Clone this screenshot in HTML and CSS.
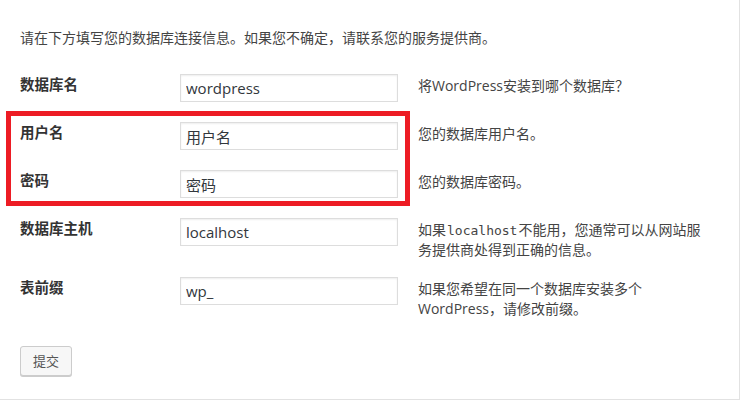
FILE: index.html
```html
<!DOCTYPE html>
<html lang="zh-CN">
<head>
<meta charset="utf-8">
<title>WordPress › 安装配置文件</title>
<link rel="stylesheet" href="styles.css">
</head>
<body>
<div class="page">
  <form class="setup">
    <p class="intro">请在下方填写您的数据库连接信息。如果您不确定，请联系您的服务提供商。</p>
    <div class="row">
      <label class="label">数据库名</label>
      <input class="field" type="text" value="wordpress">
      <div class="desc">将<span class="latin">WordPress</span>安装到哪个数据库？</div>
    </div>
    <div class="row">
      <label class="label">用户名</label>
      <input class="field" type="text" value="用户名">
      <div class="desc">您的数据库用户名。</div>
    </div>
    <div class="row">
      <label class="label">密码</label>
      <input class="field" type="text" value="密码">
      <div class="desc">您的数据库密码。</div>
    </div>
    <div class="row">
      <label class="label">数据库主机</label>
      <input class="field" type="text" value="localhost">
      <div class="desc">如果<code>localhost</code>不能用，您通常可以从网站服<br>务提供商处得到正确的信息。</div>
    </div>
    <div class="row">
      <label class="label">表前缀</label>
      <input class="field" type="text" value="wp_">
      <div class="desc">如果您希望在同一个数据库安装多个<br><span class="latin">WordPress</span>，请修改前缀。</div>
    </div>
    <div class="actions">
      <button class="button" type="button">提交</button>
    </div>
    <div class="highlight"></div>
  </form>
</div>
</body>
</html>
```
FILE: styles.css
```css
html, body {
  margin: 0;
  padding: 0;
  background: #fff;
}
body {
  font-family: "Open Sans", "Noto Sans CJK SC", sans-serif;
  font-size: 14px;
  color: #444;
}
.page {
  width: 740px;
  height: 400px;
  border-right: 1px solid #e2e2e2;
  border-bottom: 1px solid #e2e2e2;
  box-sizing: border-box;
  overflow: hidden;
}
.setup {
  position: relative;
  padding: 27px 20px 0 20px;
}
.intro {
  margin: 0 0 17px 0;
  line-height: 20px;
  font-family: "Noto Sans CJK SC", sans-serif;
  font-size: 14px;
}
.row {
  display: flex;
  align-items: flex-start;
  padding: 10px 0 8px 0;
}
.label {
  flex: none;
  width: 160px;
  font-family: "Noto Sans CJK SC", sans-serif;
  font-weight: bold;
  font-size: 14.5px;
  line-height: 20px;
  color: #333;
}
.field {
  flex: none;
  width: 218px;
  height: 28px;
  box-sizing: border-box;
  margin: 0 20px 2px 0;
  padding: 3px 5px;
  border: 1px solid #ddd;
  box-shadow: inset 0 1px 2px rgba(0, 0, 0, 0.07);
  font-family: "Open Sans", "Noto Sans CJK SC", sans-serif;
  font-size: 15px;
  line-height: 20px;
  color: #32373c;
  background: #fff;
  outline: none;
}
.desc {
  flex: none;
  width: 295px;
  margin-top: 1px;
  font-family: "Noto Sans CJK SC", sans-serif;
  font-size: 14px;
  line-height: 20px;
  color: #444;
}
.latin {
  font-family: "Open Sans", sans-serif;
}
code {
  font-family: "DejaVu Sans Mono", "Liberation Mono", monospace;
  font-size: 13px;
  line-height: 1;
  padding: 0 1px;
  color: #444;
}
.actions {
  padding-top: 19px;
}
.button {
  height: 30px;
  padding: 0 12px;
  border: 1px solid #ccc;
  border-radius: 3px;
  background: #f7f7f7;
  box-shadow: 0 1px 0 #ccc;
  font-family: "Noto Sans CJK SC", sans-serif;
  font-size: 13px;
  line-height: 28px;
  color: #555;
  vertical-align: top;
}
.highlight {
  position: absolute;
  left: 6px;
  top: 111px;
  width: 404px;
  height: 95px;
  box-sizing: border-box;
  border: 5px solid #ed1c24;
  pointer-events: none;
}
```
